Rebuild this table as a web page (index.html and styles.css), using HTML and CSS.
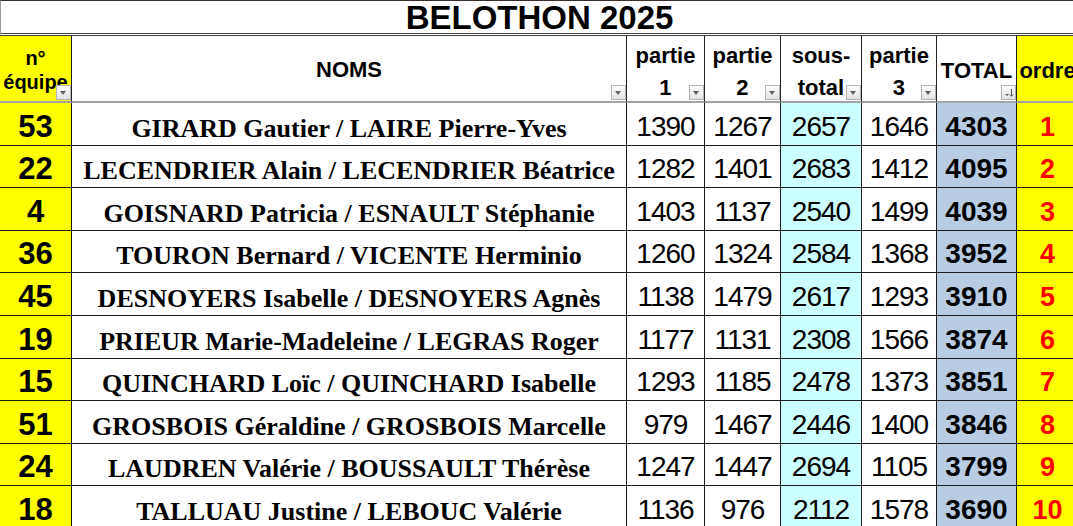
FILE: index.html
```html
<!DOCTYPE html>
<html lang="fr">
<head>
<meta charset="utf-8">
<title>BELOTHON 2025</title>
<link rel="stylesheet" href="styles.css">
</head>
<body>
<div class="sheet">
  <div class="title">BELOTHON 2025</div>

  <div class="hd hd-eq"><span>n°<br>équipe</span><i class="fb"></i></div>
  <div class="hd hd-noms"><span>NOMS</span><i class="fb"></i></div>
  <div class="hd hd-two"><span>partie<br>1</span><i class="fb"></i></div>
  <div class="hd hd-two"><span>partie<br>2</span><i class="fb"></i></div>
  <div class="hd hd-two"><span>sous-<br>total</span><i class="fb"></i></div>
  <div class="hd hd-two"><span>partie<br>3</span><i class="fb"></i></div>
  <div class="hd hd-one"><span>TOTAL</span><i class="fb fb-sort"><svg viewBox="0 0 13 13" width="13" height="13"><path d="M3 8h4l-2 2z" fill="#555"/><path d="M9.5 3v7M8 8.5l1.5 1.8 1.5-1.8" stroke="#555" stroke-width="1" fill="none"/></svg></i></div>
  <div class="hd hd-ordre"><span>ordre</span></div>

  <div class="c eq">53</div><div class="c nm">GIRARD Gautier / LAIRE Pierre-Yves</div><div class="c n">1390</div><div class="c n">1267</div><div class="c n st">2657</div><div class="c n">1646</div><div class="c tot">4303</div><div class="c ord">1</div>
  <div class="c eq">22</div><div class="c nm">LECENDRIER Alain / LECENDRIER Béatrice</div><div class="c n">1282</div><div class="c n">1401</div><div class="c n st">2683</div><div class="c n">1412</div><div class="c tot">4095</div><div class="c ord">2</div>
  <div class="c eq">4</div><div class="c nm">GOISNARD Patricia / ESNAULT Stéphanie</div><div class="c n">1403</div><div class="c n">1137</div><div class="c n st">2540</div><div class="c n">1499</div><div class="c tot">4039</div><div class="c ord">3</div>
  <div class="c eq">36</div><div class="c nm">TOURON Bernard / VICENTE Herminio</div><div class="c n">1260</div><div class="c n">1324</div><div class="c n st">2584</div><div class="c n">1368</div><div class="c tot">3952</div><div class="c ord">4</div>
  <div class="c eq">45</div><div class="c nm">DESNOYERS Isabelle / DESNOYERS Agnès</div><div class="c n">1138</div><div class="c n">1479</div><div class="c n st">2617</div><div class="c n">1293</div><div class="c tot">3910</div><div class="c ord">5</div>
  <div class="c eq">19</div><div class="c nm">PRIEUR Marie-Madeleine / LEGRAS Roger</div><div class="c n">1177</div><div class="c n">1131</div><div class="c n st">2308</div><div class="c n">1566</div><div class="c tot">3874</div><div class="c ord">6</div>
  <div class="c eq">15</div><div class="c nm">QUINCHARD Loïc / QUINCHARD Isabelle</div><div class="c n">1293</div><div class="c n">1185</div><div class="c n st">2478</div><div class="c n">1373</div><div class="c tot">3851</div><div class="c ord">7</div>
  <div class="c eq">51</div><div class="c nm">GROSBOIS Géraldine / GROSBOIS Marcelle</div><div class="c n">979</div><div class="c n">1467</div><div class="c n st">2446</div><div class="c n">1400</div><div class="c tot">3846</div><div class="c ord">8</div>
  <div class="c eq">24</div><div class="c nm">LAUDREN Valérie / BOUSSAULT Thérèse</div><div class="c n">1247</div><div class="c n">1447</div><div class="c n st">2694</div><div class="c n">1105</div><div class="c tot">3799</div><div class="c ord">9</div>
  <div class="c eq">18</div><div class="c nm">TALLUAU Justine / LEBOUC Valérie</div><div class="c n">1136</div><div class="c n">976</div><div class="c n st">2112</div><div class="c n">1578</div><div class="c tot">3690</div><div class="c ord">10</div>
</div>
</body>
</html>
```

FILE: styles.css
```css
html, body {
  margin: 0;
  padding: 0;
  background: #ffffff;
  overflow: hidden;
}

.sheet {
  display: grid;
  width: 1078px;
  grid-template-columns: 72px 555px 78px 76px 81px 75px 80px 61px;
  grid-template-rows: 36px 67px repeat(10, 42.6px);
  font-family: "Liberation Sans", Arial, sans-serif;
  color: #000;
}

.title {
  grid-column: 1 / -1;
  box-sizing: border-box;
  border-top: 1px solid #3a2f2a;
  border-left: 1px solid #9a9a9a;
  border-bottom: 3px double #444;
  display: flex;
  align-items: center;
  justify-content: center;
  font-weight: bold;
  font-size: 33px;
  line-height: 1;
  padding-top: 1px;
}

.hd {
  position: relative;
  box-sizing: border-box;
  border-right: 1px solid #222;
  border-bottom: 2px solid #a4a4a4;
  display: flex;
  align-items: center;
  justify-content: center;
  text-align: center;
  font-weight: bold;
  font-size: 22px;
  white-space: nowrap;
  background: #fff;
}

.hd-eq {
  background: #ffff00;
  font-size: 20px;
  line-height: 24px;
  padding-top: 3px;
}

.hd-noms { padding-top: 2px; }

.hd-two {
  line-height: 32px;
  padding-top: 6px;
}

.hd-one { padding-top: 4px; }

.hd-ordre {
  background: #ffff00;
  padding-top: 4px;
  border-right: none;
}

.fb {
  position: absolute;
  right: 0;
  bottom: 1px;
  width: 15px;
  height: 15px;
  box-sizing: border-box;
  border: 1px solid #b4b4b4;
  background: linear-gradient(#fdfdfd, #e2e2e2);
}

.fb::after {
  content: "";
  position: absolute;
  left: 3px;
  top: 5px;
  border-left: 3.5px solid transparent;
  border-right: 3.5px solid transparent;
  border-top: 4px solid #606060;
}

.fb-sort::after { display: none; }

.fb-sort svg {
  display: block;
}

.c {
  box-sizing: border-box;
  border-right: 1px solid #1c1c1c;
  border-bottom: 1px solid #1c1c1c;
  display: flex;
  align-items: flex-end;
  justify-content: center;
  padding-bottom: 4px;
  line-height: 1;
  white-space: nowrap;
  overflow: hidden;
}

.eq {
  background: #ffff00;
  font-weight: bold;
  font-size: 31px;
  padding-bottom: 3px;
}

.nm {
  font-family: "Liberation Serif", "Times New Roman", serif;
  font-weight: bold;
  font-size: 26px;
  padding-bottom: 3px;
}

.n {
  font-size: 28px;
  letter-spacing: -1px;
}

.st { background: #ccffff; }

.tot {
  background: #b8cce4;
  font-weight: bold;
  font-size: 28px;
}

.ord {
  background: #ffff00;
  color: #ff0000;
  font-weight: bold;
  font-size: 27px;
  border-right: none;
}
```
